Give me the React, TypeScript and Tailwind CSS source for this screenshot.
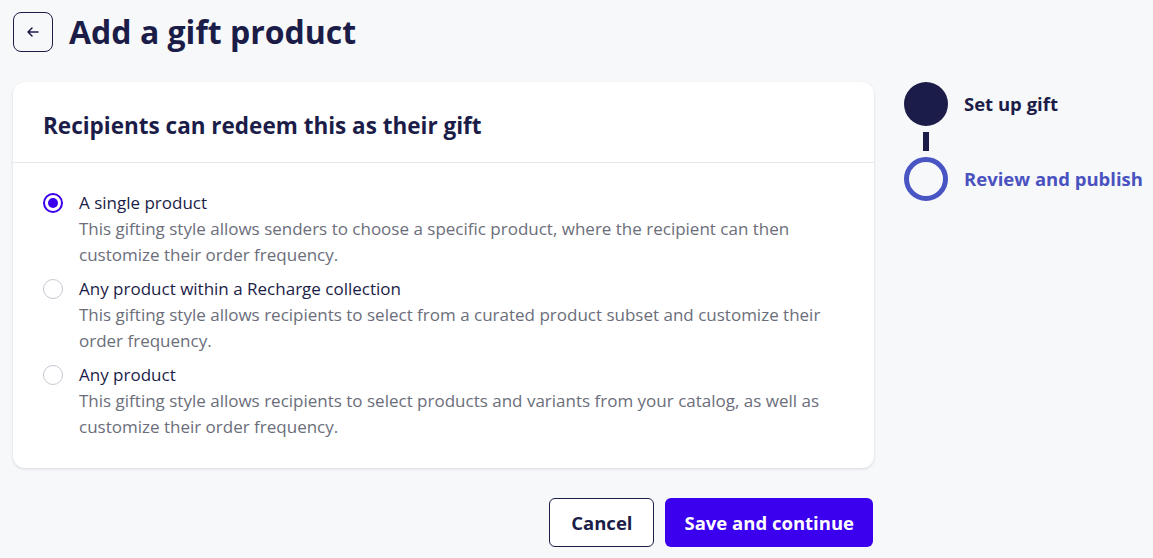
import { useState } from "react";

const options = [
  {
    id: "single",
    label: "A single product",
    desc: "This gifting style allows senders to choose a specific product, where the recipient can then customize their order frequency.",
  },
  {
    id: "collection",
    label: "Any product within a Recharge collection",
    desc: "This gifting style allows recipients to select from a curated product subset and customize their order frequency.",
  },
  {
    id: "any",
    label: "Any product",
    desc: "This gifting style allows recipients to select products and variants from your catalog, as well as customize their order frequency.",
  },
];

function Radio({ checked }: { checked: boolean }) {
  return (
    <span
      className={
        checked
          ? "mt-[3px] flex h-5 w-5 shrink-0 items-center justify-center rounded-full border-2 border-[#3b00ed] bg-white"
          : "mt-[3px] flex h-5 w-5 shrink-0 items-center justify-center rounded-full border border-[#c4c9d1] bg-white"
      }
    >
      {checked && <span className="h-[10px] w-[10px] rounded-full bg-[#3b00ed]" />}
    </span>
  );
}

export default function App() {
  const [selected, setSelected] = useState("single");

  return (
    <div className="min-h-[558px] bg-[#f7f8fa] px-[13px] pt-3 font-['Open_Sans',sans-serif] text-[#1b1d48]">
      <div className="flex items-center gap-4">
        <button className="flex h-10 w-10 items-center justify-center rounded-lg border border-[#1b1d48] text-[#1b1d48]">
          <svg width="16" height="16" viewBox="0 0 16 16" fill="none" stroke="currentColor" strokeWidth="1.5" strokeLinecap="round" strokeLinejoin="round">
            <path d="M13 8H3M7 4L3 8l4 4" />
          </svg>
        </button>
        <h1 className="text-[32px] font-bold leading-10">Add a gift product</h1>
      </div>

      <div className="mt-[30px] flex gap-[30px]">
        <div className="w-[861px] shrink-0">
          <div className="rounded-xl bg-white shadow-[0_1px_3px_rgba(27,29,72,0.15)]">
            <div className="border-b border-[#e6e8ec] px-[30px] pb-[22px] pt-[30px]">
              <h2 className="text-[22.5px] font-bold leading-7">Recipients can redeem this as their gift</h2>
            </div>
            <div className="flex flex-col gap-[8px] px-[30px] pb-[28px] pt-[27px]">
              {options.map((o) => (
                <label key={o.id} className="flex cursor-pointer gap-4" onClick={() => setSelected(o.id)}>
                  <Radio checked={selected === o.id} />
                  <div>
                    <div className="text-[17px] leading-[26px] text-[#1b1d48]">{o.label}</div>
                    <div className="text-[17px] leading-[26px] text-[#6b6e7a]">{o.desc}</div>
                  </div>
                </label>
              ))}
            </div>
          </div>

          <div className="mt-[30px] flex justify-end gap-[11px] pr-px">
            <button className="h-[49px] rounded-md border border-[#1b1d48] bg-white px-[21px] text-[18.5px] font-bold text-[#1b1d48]">
              Cancel
            </button>
            <button className="h-[49px] rounded-md bg-[#3b00ed] px-[19px] text-[18.5px] font-bold text-white">
              Save and continue
            </button>
          </div>
        </div>

        <div className="flex flex-col whitespace-nowrap">
          <div className="flex items-center gap-4">
            <span className="h-11 w-11 shrink-0 rounded-full bg-[#1b1d48]" />
            <span className="text-[18.5px] font-bold">Set up gift</span>
          </div>
          <span className="my-[6px] ml-[19px] h-[19px] w-[6px] bg-[#1b1d48]" />
          <div className="flex items-center gap-4">
            <span className="h-11 w-11 shrink-0 rounded-full border-[5px] border-[#4a55c4]" />
            <span className="text-[18.5px] font-bold text-[#4a52c0]">Review and publish</span>
          </div>
        </div>
      </div>
    </div>
  );
}
